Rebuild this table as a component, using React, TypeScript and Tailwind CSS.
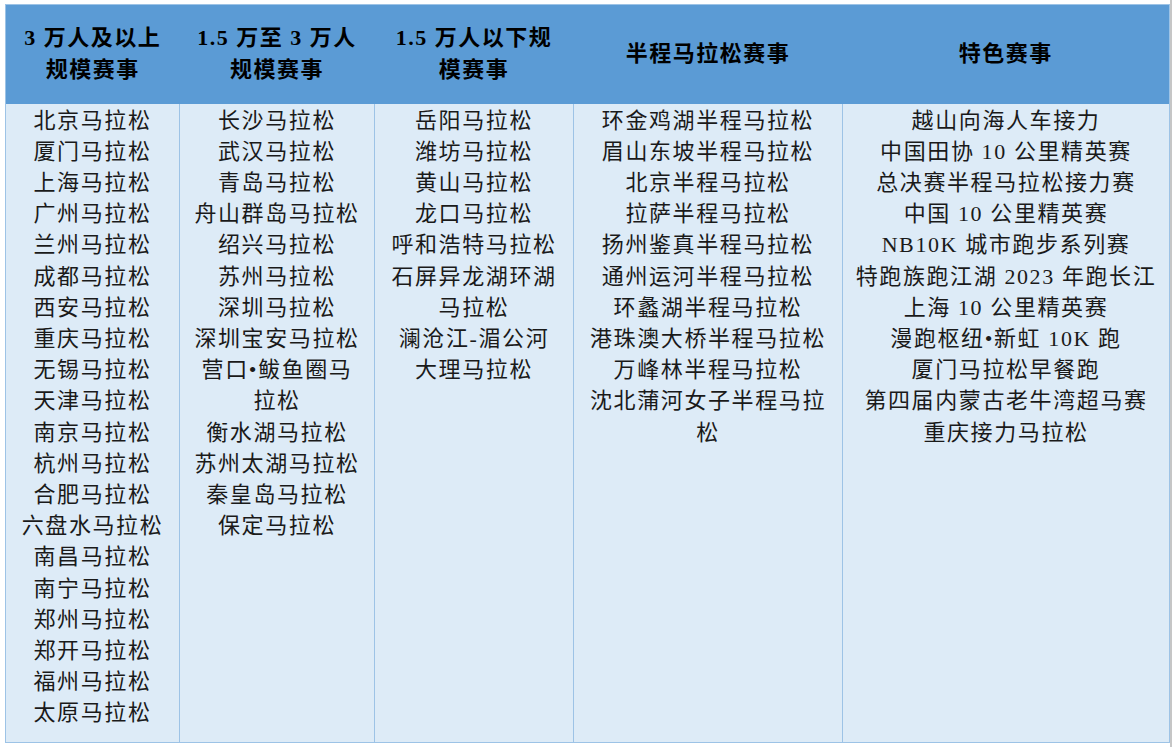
import React from 'react';

type Column = {
  title: string[];
  width: number;
  items: string[][];
};

const columns: Column[] = [
  {
    title: ['3 万人及以上', '规模赛事'],
    width: 174,
    items: [
      ['北京马拉松'], ['厦门马拉松'], ['上海马拉松'], ['广州马拉松'], ['兰州马拉松'],
      ['成都马拉松'], ['西安马拉松'], ['重庆马拉松'], ['无锡马拉松'], ['天津马拉松'],
      ['南京马拉松'], ['杭州马拉松'], ['合肥马拉松'], ['六盘水马拉松'], ['南昌马拉松'],
      ['南宁马拉松'], ['郑州马拉松'], ['郑开马拉松'], ['福州马拉松'], ['太原马拉松'],
    ],
  },
  {
    title: ['1.5 万至 3 万人', '规模赛事'],
    width: 195,
    items: [
      ['长沙马拉松'], ['武汉马拉松'], ['青岛马拉松'], ['舟山群岛马拉松'], ['绍兴马拉松'],
      ['苏州马拉松'], ['深圳马拉松'], ['深圳宝安马拉松'], ['营口•鲅鱼圈马', '拉松'],
      ['衡水湖马拉松'], ['苏州太湖马拉松'], ['秦皇岛马拉松'], ['保定马拉松'],
    ],
  },
  {
    title: ['1.5 万人以下规', '模赛事'],
    width: 199,
    items: [
      ['岳阳马拉松'], ['潍坊马拉松'], ['黄山马拉松'], ['龙口马拉松'], ['呼和浩特马拉松'],
      ['石屏异龙湖环湖', '马拉松'], ['澜沧江-湄公河'], ['大理马拉松'],
    ],
  },
  {
    title: ['半程马拉松赛事'],
    width: 269,
    items: [
      ['环金鸡湖半程马拉松'], ['眉山东坡半程马拉松'], ['北京半程马拉松'], ['拉萨半程马拉松'],
      ['扬州鉴真半程马拉松'], ['通州运河半程马拉松'], ['环蠡湖半程马拉松'], ['港珠澳大桥半程马拉松'],
      ['万峰林半程马拉松'], ['沈北蒲河女子半程马拉', '松'],
    ],
  },
  {
    title: ['特色赛事'],
    width: 327,
    items: [
      ['越山向海人车接力'], ['中国田协 10 公里精英赛'], ['总决赛半程马拉松接力赛'], ['中国 10 公里精英赛'],
      ['NB10K 城市跑步系列赛'], ['特跑族跑江湖 2023 年跑长江'], ['上海 10 公里精英赛'], ['漫跑枢纽•新虹 10K 跑'],
      ['厦门马拉松早餐跑'], ['第四届内蒙古老牛湾超马赛'], ['重庆接力马拉松'],
    ],
  },
];

const bodyFont = { fontFamily: '"Liberation Serif", "Noto Sans CJK SC", serif' };
const headFont = { fontFamily: '"Liberation Serif", "Noto Sans CJK SC", sans-serif' };

export default function App() {
  return (
    <div className="flex w-[1173px] h-[747px] bg-white overflow-hidden">
      <div className="pl-[5px] pt-[4px]">
        <table className="table-fixed border-collapse border border-[#9dc3e6]">
          <colgroup>
            {columns.map((c, i) => (
              <col key={i} style={{ width: c.width }} />
            ))}
          </colgroup>
          <thead>
            <tr className="bg-[#5b9bd5] h-[99px]">
              {columns.map((c, i) => (
                <th key={i} className="p-0 align-middle text-center font-bold text-[22px] leading-[32px] tracking-[1.5px] text-black" style={headFont}>
                  {c.title.map((t, j) => (
                    <div key={j} className="whitespace-nowrap">{t}</div>
                  ))}
                </th>
              ))}
            </tr>
          </thead>
          <tbody>
            <tr className="bg-[#ddebf7] h-[639px]">
              {columns.map((c, i) => (
                <td key={i} className="p-0 pt-[1px] align-top text-center border-x border-[#9dc3e6] text-[22px] leading-[31.2px] tracking-[1.6px] text-[#1a1a1a]" style={bodyFont}>
                  {c.items.map((item, j) =>
                    item.map((line, k) => (
                      <div key={`${j}-${k}`} className="whitespace-nowrap">{line}</div>
                    ))
                  )}
                </td>
              ))}
            </tr>
          </tbody>
        </table>
      </div>
      <div className="ml-auto mr-[1px] w-[2px] h-full bg-[#c6c6c6]" />
    </div>
  );
}
